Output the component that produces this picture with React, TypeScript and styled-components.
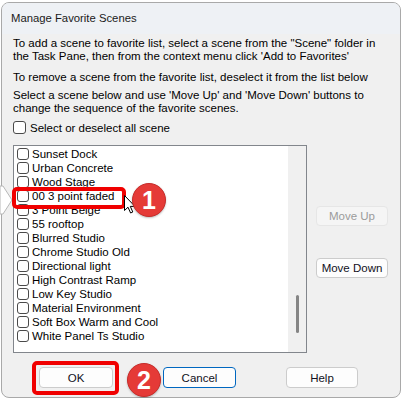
import { createGlobalStyle, styled } from "styled-components";

const GlobalStyle = createGlobalStyle`
  html, body {
    margin: 0;
    padding: 0;
    background: #ffffff;
  }
  body {
    font-family: "Liberation Sans", Arial, sans-serif;
    font-size: 11.5px;
    color: #000000;
  }
`;

const scenes = [
  "Sunset Dock",
  "Urban Concrete",
  "Wood Stage",
  "00 3 point faded",
  "3 Point Beige",
  "55 rooftop",
  "Blurred Studio",
  "Chrome Studio Old",
  "Directional light",
  "High Contrast Ramp",
  "Low Key Studio",
  "Material Environment",
  "Soft Box Warm and Cool",
  "White Panel Ts Studio",
];

const App = () => {
  return (
    <Page>
      <GlobalStyle />
      <Dialog>
        <TitleBar>Manage Favorite Scenes</TitleBar>
        <Content>
          <Para $gap={8}>
            To add a scene to favorite list, select a scene from the "Scene" folder in
            <br />
            the Task Pane, then from the context menu click 'Add to Favorites'
          </Para>
          <Para $gap={5}>
            To remove a scene from the favorite list, deselect it from the list below
          </Para>
          <Para $gap={6}>
            Select a scene below and use 'Move Up' and 'Move Down' buttons to
            <br />
            change the sequence of the favorite scenes.
          </Para>
          <CheckRow>
            <Check $size={13} />
            Select or deselect all scene
          </CheckRow>

          <Middle>
            <ListBox>
              <Items>
                {scenes.map((s) => (
                  <Item key={s}>
                    <Check $size={12} />
                    <span>{s}</span>
                  </Item>
                ))}
              </Items>
              <Track>
                <Thumb />
              </Track>
            </ListBox>
            <Side>
              <Button $kind="disabled">Move Up</Button>
              <Button>Move Down</Button>
            </Side>
          </Middle>

          <ButtonRow>
            <Button $width={74}>OK</Button>
            <Button $width={73} $kind="primary">
              Cancel
            </Button>
            <Button $width={72}>Help</Button>
          </ButtonRow>
        </Content>
      </Dialog>

      <Notch width="14" height="32" viewBox="0 0 14 32">
        <polygon points="0,1 3,1 12,15 3,29 0,29" fill="#ffffff" stroke="#b8b8b8" strokeWidth="1" />
      </Notch>

      <Highlight $left={12} $top={187} $width={114} $height={22} $border={4} />
      <Highlight $left={32} $top={361} $width={87} $height={34} $border={4} />

      <Pointer width="12" height="19" viewBox="0 0 12 19">
        <path
          d="M0.5 0.5 L0.5 15.5 L4 12.2 L6.6 18 L8.8 17 L6.3 11.4 L11 11.4 Z"
          fill="#ffffff"
          stroke="#000000"
          strokeWidth="1"
          strokeLinejoin="round"
        />
      </Pointer>

      <Badge $left={132} $top={183}>1</Badge>
      <Badge $left={127} $top={363}>2</Badge>
    </Page>
  );
};

export default App;

const Page = styled.div`
  position: relative;
  width: 402px;
  height: 398px;
  overflow: hidden;
`;

const Dialog = styled.div`
  box-sizing: border-box;
  width: 400px;
  height: 396px;
  margin: 2px 0 0 1px;
  border: 1px solid #a9a9a9;
  border-radius: 8px;
  background: #f0f0f0;
  overflow: hidden;
`;

const TitleBar = styled.div`
  height: 31px;
  display: flex;
  align-items: center;
  padding-left: 9px;
  padding-bottom: 1px;
  box-sizing: border-box;
  background: #eef1f5;
  font-size: 11.3px;
  color: #1a1a1a;
`;

const Content = styled.div`
  padding: 3px 0 0 11px;
`;

const Para = styled.p<{ $gap: number }>`
  margin: 0 0 ${(p) => p.$gap}px;
  line-height: 13px;
  white-space: nowrap;
`;

const CheckRow = styled.label`
  display: flex;
  align-items: center;
  gap: 4px;
  height: 13px;
  margin-bottom: 11px;
`;

const Check = styled.span<{ $size: number }>`
  box-sizing: border-box;
  flex: none;
  width: ${(p) => p.$size}px;
  height: ${(p) => p.$size}px;
  border: 1px solid #4a4a4a;
  border-radius: 3px;
  background: #ffffff;
`;

const Middle = styled.div`
  display: flex;
  align-items: flex-start;
  gap: 9px;
`;

const ListBox = styled.div`
  box-sizing: border-box;
  width: 294px;
  height: 208px;
  display: flex;
  border: 1px solid #82868c;
  background: #ffffff;
`;

const Items = styled.div`
  flex: 1;
  padding: 1px 0 0 3px;
`;

const Item = styled.div`
  display: flex;
  align-items: center;
  gap: 3px;
  height: 14px;
  white-space: nowrap;
`;

const Track = styled.div`
  width: 18px;
  background: #f0f0f0;
  display: flex;
  justify-content: center;
`;

const Thumb = styled.div`
  width: 3px;
  height: 38px;
  margin-top: 149px;
  border-radius: 2px;
  background: #858585;
`;

const Side = styled.div`
  display: flex;
  flex-direction: column;
  gap: 32px;
  padding-top: 61px;
`;

type Kind = "default" | "primary" | "disabled";

const Button = styled.div<{ $kind?: Kind; $width?: number }>`
  box-sizing: border-box;
  width: ${(p) => p.$width ?? 72}px;
  height: ${(p) => (p.$width ? 21 : 20)}px;
  display: flex;
  align-items: center;
  justify-content: center;
  border-radius: 4px;
  font-size: 11.5px;
  background: ${(p) => (p.$kind === "disabled" ? "#f5f5f5" : "#fdfdfd")};
  color: ${(p) => (p.$kind === "disabled" ? "#9b9b9b" : "#111122")};
  border: 1px solid
    ${(p) =>
      p.$kind === "primary" ? "#0067c0" : p.$kind === "disabled" ? "#e6e6e6" : "#cccccc"};
`;

const ButtonRow = styled.div`
  display: flex;
  gap: 50px;
  padding: 14px 0 0 26px;
`;

const Notch = styled.svg`
  position: absolute;
  left: 0;
  top: 185px;
`;

const Highlight = styled.div<{
  $left: number;
  $top: number;
  $width: number;
  $height: number;
  $border: number;
}>`
  position: absolute;
  box-sizing: border-box;
  left: ${(p) => p.$left}px;
  top: ${(p) => p.$top}px;
  width: ${(p) => p.$width}px;
  height: ${(p) => p.$height}px;
  border: ${(p) => p.$border}px solid #f00000;
  border-radius: 5px;
`;

const Pointer = styled.svg`
  position: absolute;
  left: 124px;
  top: 195px;
`;

const Badge = styled.div<{ $left: number; $top: number }>`
  position: absolute;
  left: ${(p) => p.$left}px;
  top: ${(p) => p.$top}px;
  width: 34px;
  height: 34px;
  box-sizing: border-box;
  border-radius: 50%;
  background: #e53a37;
  border: 1px solid #c62c2a;
  box-shadow: 0 1px 2px rgba(0, 0, 0, 0.25);
  display: flex;
  align-items: center;
  justify-content: center;
  color: #ffffff;
  font-family: "Liberation Sans", Arial, sans-serif;
  font-weight: 700;
  font-size: 25px;
`;
